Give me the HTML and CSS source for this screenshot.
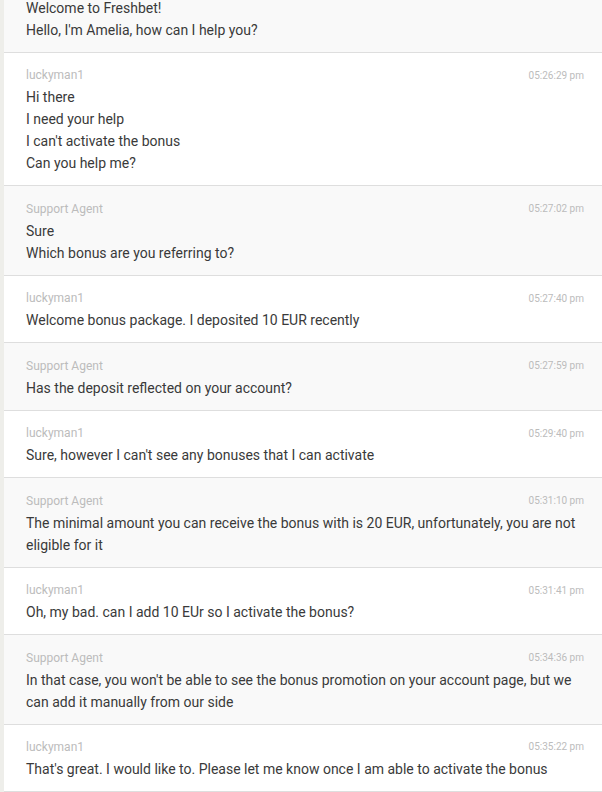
FILE: index.html
```html
<!DOCTYPE html>
<html lang="en">
<head>
    <meta charset="UTF-8">
    <meta name="viewport" content="width=device-width, initial-scale=1.0">
    <title>Chat transcript</title>
    <link rel="stylesheet" href="styles.css">
</head>
<body>
    <div class="transcript">
        <ul class="messages">
            <!-- scrolled: only the tail of the greeting is in view -->
            <li class="msg agent scrolled">
                <p>Welcome to Freshbet!</p>
                <p>Hello, I'm Amelia, how can I help you?</p>
            </li>
            <li class="msg">
                <div class="msg-head"><span class="author">luckyman1</span><span class="time">05:26:29 pm</span></div>
                <p>Hi there</p>
                <p>I need your help</p>
                <p>I can't activate the bonus</p>
                <p>Can you help me?</p>
            </li>
            <li class="msg agent">
                <div class="msg-head"><span class="author">Support Agent</span><span class="time">05:27:02 pm</span></div>
                <p>Sure</p>
                <p>Which bonus are you referring to?</p>
            </li>
            <li class="msg">
                <div class="msg-head"><span class="author">luckyman1</span><span class="time">05:27:40 pm</span></div>
                <p>Welcome bonus package. I deposited 10 EUR recently</p>
            </li>
            <li class="msg agent">
                <div class="msg-head"><span class="author">Support Agent</span><span class="time">05:27:59 pm</span></div>
                <p>Has the deposit reflected on your account?</p>
            </li>
            <li class="msg">
                <div class="msg-head"><span class="author">luckyman1</span><span class="time">05:29:40 pm</span></div>
                <p>Sure, however I can't see any bonuses that I can activate</p>
            </li>
            <li class="msg agent">
                <div class="msg-head"><span class="author">Support Agent</span><span class="time">05:31:10 pm</span></div>
                <p>The minimal amount you can receive the bonus with is 20 EUR, unfortunately, you are not eligible for it</p>
            </li>
            <li class="msg">
                <div class="msg-head"><span class="author">luckyman1</span><span class="time">05:31:41 pm</span></div>
                <p>Oh, my bad. can I add 10 EUr so I activate the bonus?</p>
            </li>
            <li class="msg agent">
                <div class="msg-head"><span class="author">Support Agent</span><span class="time">05:34:36 pm</span></div>
                <p>In that case, you won't be able to see the bonus promotion on your account page, but we can add it manually from our side</p>
            </li>
            <li class="msg">
                <div class="msg-head"><span class="author">luckyman1</span><span class="time">05:35:22 pm</span></div>
                <p>That's great. I would like to. Please let me know once I am able to activate the bonus</p>
            </li>
        </ul>
    </div>
</body>
</html>
```

FILE: styles.css
```css
html, body { margin: 0; height: 100%; }
body { font-family: Roboto, "Liberation Sans", Arial, sans-serif; background: #eeeeea; color: #3a3a3a; overflow: hidden; }
.transcript { margin-left: 4px; height: 792px; overflow: hidden; background: #fff; }
.messages { list-style: none; margin: 0; padding: 0; }
.msg { background: #fff; padding: 11.44px 18px 11px 22px; border-bottom: 1px solid #dedede; }
.msg.agent { background: #f9f9f9; }
.msg.scrolled { padding-top: 0; margin-top: -3px; }
.msg-head { display: flex; justify-content: space-between; align-items: center; height: 22px; }
.author { font-size: 12px; color: #bcbcbc; }
.time { font-size: 10px; color: #bcbcbc; }
.msg p { margin: 0; font-size: 14px; line-height: 22px; }
```
